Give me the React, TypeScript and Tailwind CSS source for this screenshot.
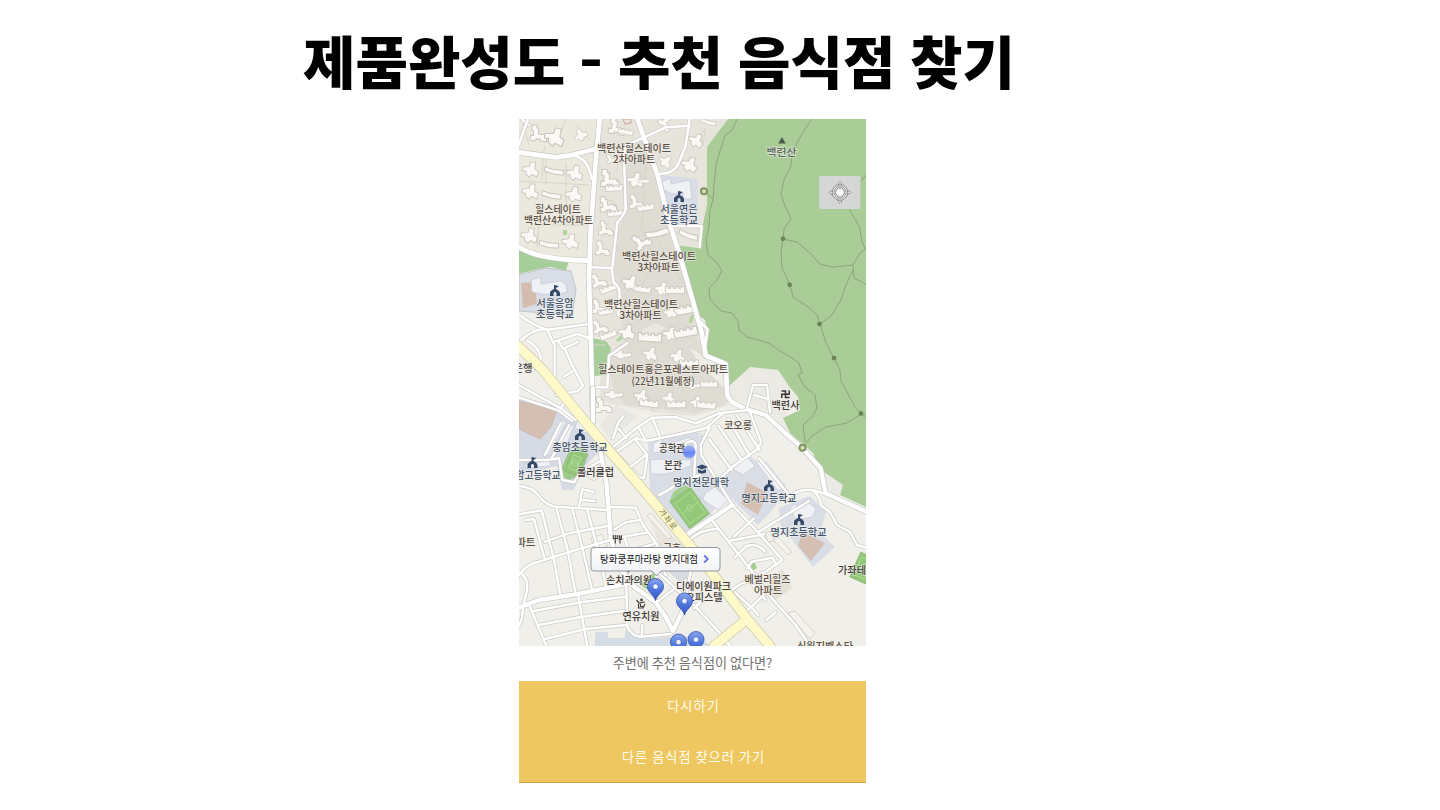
import React from "react";

const font = '"Noto Sans CJK KR", "Noto Sans", sans-serif';

// Road geometry is kept at three units per map pixel, one sheet for the north and one for the south.
const northMain = [
  "M242 0L230 130L215 330L210 480L215 650L222 900",
  "M355 0L375 55L415 165L450 310L480 400L548 640L560 710L620 735L625 830L640 850L690 875",
  "M0 100L110 115L150 110L228 90",
  "M0 385Q60 422 208 425",
];
const northRoads = [
  "M27 0L0 75",
  "M165 110Q210 120 217 180",
  "M512 0L500 80L480 130Q465 168 415 165",
  "M375 55L320 80L315 110L320 270Q315 290 295 310L280 445",
  "M375 55L440 25L512 20",
  "M450 320L548 322L542 384",
  "M215 445L278 447L284 490Q304 505 302 530L298 590",
  "M0 587Q40 618 85 632L210 615",
  "M0 670Q45 625 85 632L107 680V780",
  "M107 668L175 645L210 657M118 665L132 690L178 668M138 690L160 740L192 800L175 817L110 828M25 665Q62 685 66 720L52 750M135 773L160 757",
  "M0 835L120 875L160 905",
  "M217 805H265L270 710L325 673",
  "M530 592L566 632L555 705",
];
const southMain = [
  "M222 -20V80",
  "M245 175L262 260L270 360L275 430Q288 480 310 530L345 575L410 622L440 665L462 708L490 650L500 610",
  "M690 45L740 60L800 115L850 160L905 220L920 295L1045 352",
  "M-5 640L60 615L170 598L330 565",
  "M500 422L640 330",
];
const southRoads = [
  "M0 -30L125 40L170 75M125 40L150 5",
  "M0 273Q40 275 62 305Q80 330 110 335L265 345",
  "M272 335L350 338L372 390L415 450L440 540",
  "M180 335L190 283L224 290M190 315L228 318",
  "M0 358L68 346L105 495L125 605",
  "M112 340L145 460L170 598",
  "M160 342L188 450L220 588",
  "M205 345L230 440L262 575",
  "M20 375L45 372L78 495",
  "M-5 547Q22 505 60 500L170 465L275 435",
  "M78 440L150 415L265 393",
  "M0 530Q30 550 24 585L12 640Q10 680 -5 700",
  "M33 635L83 755M177 598L205 755",
  "M45 648L185 622L318 605M60 690L190 665L315 648M75 733L200 702L322 690",
  "M322 575L325 695Q335 722 365 725L455 717M368 722L370 690",
  "M287 402L320 382L362 375M298 428L388 412M318 430L325 458M330 470L410 445",
  "M390 520L420 535L520 625L590 700L635 755",
  "M415 620L500 555M518 515L502 600M525 640L555 610",
  "M578 375L625 435L700 530L750 600L830 690L875 755",
  "M640 330L720 415L790 495L740 530L660 570L625 595",
  "M510 435Q550 400 600 402M628 438L735 418M648 487L680 455Q710 440 738 470M645 425L705 370",
  "M720 410L870 318M685 520L698 500L760 488L772 510",
  "M648 592L700 640L718 660M668 660L705 628L735 598M695 562L740 615M742 675L770 652",
  "M272 165L355 97L400 68L470 66L530 85L600 55L690 45",
  "M275 182L350 130L385 137L470 120L560 100L612 55",
  "M358 95L380 137M400 68L422 122M348 133L385 180L375 250L335 238M300 185L365 250M335 215L378 182M282 130L298 82L315 62M322 130L300 102",
  "M572 98L545 150L548 182L640 330M570 132L638 225M598 92L668 195M628 72L692 182M655 62L722 165M690 45L727 142L712 165L640 215L610 245",
  "M684 39L702 -30L744 -30L753 51M705 0L745 12",
  "M720 190L810 300M800 315Q835 278 880 285L920 297",
  "M880 285Q905 305 905 330L933 351L954 390L993 411L1014 450L1045 459",
  "M420 300Q455 285 480 260L545 240M525 255L530 150Q525 130 500 145L498 180",
  "M85 195L120 190L130 255L165 262L185 232L240 200M0 195L85 195M78 180L125 85M98 190L150 90",
];

const yellowRoad = "M516 344L542 369L578 413L606 447L640 486L672 524L706 565L747 619L770 646M747 619L714 646";

const trails = [
  "M738 117L732 130L725 136L720 151L716 165L714 185L713 199L710 210L709 226L706 240L708 255L717 263L722 271L716 281L709 288L710 299L721 311L732 313L738 321L739 330L747 337L769 343L780 351L792 358L799 363L802 373",
  "M704 191L713 199",
  "M813 117L803 132L797 143L792 154L791 166L784 180L781 194L785 206L791 219L784 229L783 239L781 250L782 268L790 285L793 297L807 306L817 315L820 324L826 343L834 358L840 370L841 381L847 392L854 405L861 414L869 418",
  "M783 239L797 242L810 253L820 264L832 267L853 265L860 253L868 247",
  "M853 265L854 278L860 281L868 286M853 270L846 285L841 300L831 316L820 324",
  "M866 175L861 181M849 209L855 219L860 228L862 242L866 250",
  "M802 373L798 375L805 387L815 395L817 408L812 417L803 425L805 442",
  "M803 447L812 436L826 427L847 423L861 414",
];

type Label = [string, number, number, number, string?];

const brown = "#5c5044";
const navy = "#41526b";
const dark = "#3e3a36";

const labels: Label[] = [
  ["백련산힐스테이트", 634, 152, 74],
  ["2차아파트", 634, 163.3, 42],
  ["힐스테이트", 558, 213, 46],
  ["백련산4차아파트", 558.5, 224, 69],
  ["서울연은", 679, 212.5, 37, navy],
  ["초등학교", 679, 223.5, 38, navy],
  ["백련산힐스테이트", 659, 260, 74],
  ["3차아파트", 658.5, 271.3, 42],
  ["백련산힐스테이트", 641, 308, 74],
  ["3차아파트", 640.5, 319.3, 42],
  ["서울응암", 555, 307, 37, navy],
  ["초등학교", 555, 318, 38, navy],
  ["은행", 523, 372, 19, dark],
  ["힐스테이트홍은포레스트아파트", 663, 373.3, 130],
  ["(22년11월예정)", 663, 385.3, 63],
  ["백련산", 781.5, 156, 30, "#59645a"],
  ["백련사", 785.5, 409, 28, dark],
  ["코오롱", 738, 429.3, 28],
  ["충암초등학교", 580, 450.5, 55, navy],
  ["암고등학교", 538, 479, 45, navy],
  ["롤러클럽", 595.5, 476, 37, dark],
  ["공학관", 672, 451.5, 26, dark],
  ["본관", 673, 468.5, 18, dark],
  ["명지전문대학", 701, 485.5, 56, navy],
  ["명지고등학교", 769, 501.5, 55, navy],
  ["명지초등학교", 798.5, 536, 56, navy],
  ["아파트", 521, 545.5, 29],
  ["금호", 672, 552, 18],
  ["손치과의원", 629, 584, 46, dark],
  ["연유치원", 641, 620.3, 37, dark],
  ["디에이원파크", 703.5, 590, 55, dark],
  ["오피스텔", 704, 601, 37, dark],
  ["베벌리힐즈", 767.5, 583, 46],
  ["아파트", 768, 594, 28],
  ["가좌테", 852, 574, 28, dark],
  ["신원지벨스타", 825, 649.5, 56],
];

const tower = "M-9 -2L-2 -3L-1 -8L4 -8L4 -1L8 1L7 7L1 5L-1 8L-5 5L-5 2L-9 2Z";
const slab = "M-10 -4L-2 -2L10 -2L10 3L1 3L-10 1Z";
const stairs = "M-6 -9H-1V-6H1V0H8V2H10V7H4V5H-1V7H-7V2H-4V-3H-6Z";
const bars = "M-12 -3L-6 -3L-5 -6L0 -6L1 -2L12 -3L12 2L2 3L0 5L-5 5L-7 2L-12 2Z";
const comb = "M-11 -4H-8V-2H-5V-4H-2V-2H1V-4H4V-2H7V-4H11V4H-11Z";

const buildings: [string, number, number, number, number][] = [
  [stairs, 55, 45, 5, 1], [tower, 108, 55, 10, 1.2], [tower, 185, 48, -40, 0.8], [slab, 15, 5, 40, 0.8],
  [tower, 36, 152, 5, 1], [slab, 105, 157, 6, 1], [tower, 168, 162, 5, 1],
  [tower, 35, 218, 5, 1], [slab, 97, 229, 6, 1], [tower, 165, 226, 0, 1],
  [tower, 32, 350, 5, 1], [slab, 90, 377, 4, 1], [tower, 155, 368, 0, 1],
  [stairs, 290, 25, 10, 1], [comb, 320, 38, 10, 0.7], [stairs, 275, 120, -10, 0.6],
  [stairs, 268, 180, 0, 1.1], [comb, 285, 207, -3, 0.8], [stairs, 263, 258, -5, 1], [comb, 288, 283, -5, 0.7],
  [stairs, 258, 330, 5, 0.9], [stairs, 248, 390, 5, 0.9],
  [tower, 350, 184, 5, 1], [comb, 374, 186, 0, 0.5], [stairs, 350, 250, 0, 0.9], [comb, 380, 265, -8, 0.8],
  [tower, 440, 128, 30, 0.8], [tower, 512, 137, 15, 1], [tower, 532, 65, 20, 0.9], [slab, 568, 10, 10, 0.8],
  [stairs, 440, 10, 50, 0.9], [stairs, 365, 370, -30, 1], [slab, 415, 343, -18, 1.2], [slab, 508, 349, 15, 1],
  [tower, 335, 492, 15, 1], [comb, 370, 510, 8, 0.8], [tower, 430, 510, 5, 0.9], [comb, 468, 513, 0, 0.9],
  [stairs, 237, 487, -10, 0.9], [comb, 268, 509, -20, 0.8], [stairs, 238, 565, 0, 0.9], [comb, 260, 578, -10, 0.7],
  [stairs, 240, 625, -10, 0.9], [comb, 268, 648, -20, 0.8],
  [tower, 325, 640, 5, 1], [comb, 393, 655, 4, 1.1], [tower, 455, 645, 5, 0.9], [comb, 500, 640, -10, 1.1],
  [comb, 500, 572, -10, 1.1], [tower, 455, 580, 0, 0.8],
  [bars, 310, 708, 0, 0.8], [tower, 395, 705, 10, 0.9], [tower, 477, 712, 5, 0.9], [comb, 510, 733, 0, 0.9],
  [bars, 285, 828, 0, 0.8], [stairs, 250, 860, 0, 1],
  [tower, 368, 832, 10, 0.9], [comb, 390, 853, 8, 0.9], [tower, 450, 838, 0, 0.8], [comb, 472, 856, 0, 0.9],
  [tower, 534, 850, 0, 0.8], [comb, 562, 858, 5, 0.9], [bars, 525, 800, 0, 0.7], [comb, 570, 795, 0, 0.8],
];

function School({ x, y }: { x: number; y: number }) {
  return (
    <path
      transform={`translate(${x} ${y})`}
      d="M-5 5V1L-3 -1L-1 -2V-6L4 -5L1 -3V-2L4 0L5 2V5H1.5V2Q0 0 -1.5 2V5Z"
      fill="#354a68"
    />
  );
}

function Pin({ x, y }: { x: number; y: number }) {
  return (
    <g transform={`translate(${x} ${y})`}>
      <path d="M0 14C-1.5 8 -8 6 -8 0A8 8 0 0 1 8 0C8 6 1.5 8 0 14Z" fill="url(#pin)" stroke="#3150a5" strokeWidth="0.8" />
      <circle r="2.6" fill="#f3f6ff" stroke="#3e5fb9" strokeWidth="0.5" />
    </g>
  );
}

function Field({ x, y, w, h, r }: { x: number; y: number; w: number; h: number; r: number }) {
  return (
    <g transform={`translate(${x} ${y}) rotate(${r})`} fill="none" stroke="#b9dfa4" strokeWidth="0.7">
      <rect x={-w / 2} y={-h / 2} width={w} height={h} fill="#93c878" stroke="#8bb57b" />
      <path d={`M${-w / 2 + 3} ${-h / 2 + 4}H${w / 2 - 3}V${h / 2 - 4}H${-w / 2 + 3}ZM${-w / 2 + 3} 0H${w / 2 - 3}`} />
      <circle r="3" />
    </g>
  );
}

function Roads({ paths, color, width }: { paths: string[]; color: string; width: number }) {
  return (
    <g stroke={color} strokeWidth={width}>
      {paths.map((d) => (
        <path key={d} d={d} />
      ))}
    </g>
  );
}

const north = "translate(519 119) scale(0.33333)";
const south = "translate(519 395) scale(0.33333)";

function CityMap() {
  return (
    <svg className="block h-[527px] w-[347px] shrink-0" viewBox="519 119 347 527" style={{ fontFamily: font }}>
      <defs>
        <linearGradient id="pin" x1="0" y1="0" x2="0" y2="1">
          <stop offset="0" stopColor="#8aa6f2" />
          <stop offset="0.5" stopColor="#4f76df" />
          <stop offset="1" stopColor="#3158c4" />
        </linearGradient>
        <linearGradient id="bubble" x1="0" y1="0" x2="0" y2="1">
          <stop offset="0" stopColor="#ffffff" />
          <stop offset="1" stopColor="#edf0f4" />
        </linearGradient>
        <linearGradient id="here" x1="0" y1="0" x2="0" y2="1">
          <stop offset="0" stopColor="#a3b6f8" />
          <stop offset="0.45" stopColor="#7993f4" />
          <stop offset="0.55" stopColor="#6283f4" />
          <stop offset="1" stopColor="#86a2fa" />
        </linearGradient>
      </defs>
      <rect x="519" y="119" width="347" height="527" fill="#f1efe9" />
      <path d="M519 119H599L590 260L519 248Z" fill="#ebe8de" />
      <path d="M600 119H728L707 150V205L700 248L678 246L697 310L703 355L727 367L728 405L695 416L660 413L600 402V378L610 355L606 339L593 336L590 262Z" fill="#e7e4dc" />
      <path d="M626 147L645 140L668 230L690 300L698 340L725 365V405L695 413L625 405L612 385L608 355L625 340L618 300L610 268L617 230L626 212Z" fill="#dfdcd4" />
      <path d="M690 348L703 356L725 365L727 390L700 365Z" fill="#f0ede8" />
      <path d="M600 425L616 405L638 416L610 440Z" fill="#e9e7e2" />
      <path d="M738 378L750 367L778 370L788 384L801 400L783 418L790 435L820 462L843 485L838 497L825 492L817 463L770 412L745 402L728 400L730 388Z" fill="#ebeae4" />
      <path d="M728 119H866V507L840 495L843 485L818 468L813 453L790 433L783 418L800 410L798 397L788 385L785 380L778 370L750 367L738 378L728 387V370L705 357L708 333L705 320L695 313L675 245L698 248L707 205V147Z" fill="#aacd98" />
      <path d="M519 247L545 256L569 260L566 271L551 267L538 269L519 274Z" fill="#a6ce98" />
      <path d="M593 338L606 341L611 348L606 375L594 376Z" fill="#a6ce98" />
      <path d="M640 585L654 572L656 582L648 590ZM749 567L754 561L757 568L752 571Z" fill="#9fce8d" />

      <path d="M519 275L545 268L571 271L576 290L572 315L519 311Z" fill="#d8dde6" stroke="#bfc4ca" />
      <path d="M521 283L535 282L537 304L523 308Z" fill="#d6bcae" />
      <path d="M661 175L698 179L697 224L674 225L665 193Z" fill="#d8dde8" />
      <path d="M519 396L551 405L590 425L604 447L583 468L574 490L562 490L557 466L519 475Z" fill="#d5dae5" />
      <path d="M519 401L557 410L551 427L540 439L519 429Z" fill="#d5bfb3" stroke="#c8b2a9" strokeWidth="0.7" />
      <path d="M648 441L695 432L706 436L700 456L729 497L719 506L685 533L661 505L650 495Z" fill="#d8dde6" />
      <path d="M724 476L748 453L786 493L768 515L758 525L721 488Z" fill="#d8dde6" />
      <path d="M747 482L767 493L758 515L741 504Z" fill="#d5bfb3" />
      <path d="M779 508L810 496L826 512L820 533L835 547L813 567L780 524Z" fill="#d8dde6" />
      <path d="M802 532L825 543L811 561L798 546Z" fill="#d5bfb3" />
      <path d="M595 646V632H608V638H625V630L650 638L690 636L715 646Z" fill="#d5dce3" />
      <path d="M668 571L690 570L686 588Z" fill="#d7dce3" />
      <path d="M775 576L782 569L792 588L773 602L763 591Z" fill="#e4e0d4" />
      <path d="M648 514L665 530L684 547H660Z" fill="#e9e5de" />

      <g fill="#eff1f5" stroke="#c6ccd8" strokeWidth="0.8">
        <path d="M662 182L670 178L671 184L690 180L692 199H683V193L672 194L664 190Z" />
        <path d="M531 280L541 277V284L560 281L566 284L567 292L556 295L542 294L532 292ZM552 300L565 299L567 306L560 308Z" />
        <path d="M577 421L592 426L588 434L575 428ZM561 420L566 422L548 456L543 453ZM570 424L574 426L565 448L560 446ZM525 464L550 461L551 466L525 468Z" />
        <path d="M653 444L662 438V446L690 437L691 443L664 451L653 453ZM650 460L662 459L691 460V466L667 474H651ZM697 434L700 433L702 436L699 437Z" />
        <path d="M731 468L746 456L755 466L743 475ZM756 462L760 460L783 488L778 491ZM766 462L785 486L782 489L763 465ZM789 509L795 504L800 508L806 501L816 508L813 517L797 520Z" />
        <path d="M705 493L715 487L728 500L718 510L703 500ZM700 497L712 515L702 522Z" />
      </g>
      <g fill="#f4f2ed" stroke="#d2cdc2" strokeWidth="0.8">
        <path d="M651 513L672 537L668 539L647 516ZM591 538L602 534L607 546L596 552ZM590 467L601 464L602 474L594 481L586 476ZM773 540L778 537L792 552L788 555ZM765 533L770 531L774 541L768 542ZM775 577L781 574L783 583L776 586ZM788 613L795 611L815 633L810 639Z" />
      </g>
      <path d="M569 452L581 447L588 454L581 474L568 480L560 473Z" fill="#9bcc86" stroke="#8bb57b" strokeWidth="0.7" />
      <Field x={575} y={463} w={14} h={22} r={20} />
      <path d="M669 502L674 491L685 485L692 489L683 497Z" fill="#a5cf91" />
      <Field x={690} y={508} w={25} h={33} r={-36} />
      <Field x={863} y={568} w={17} h={27} r={24} />
      <path d="M616 340L622 334L624 338L618 342ZM689 320L691 315H694L692 323H689ZM563 230H567V235H563Z" fill="#b2d69b" />
      <path d="M623 119H631V123L625 124Z" fill="none" stroke="#d8a096" />

      <g fill="none" stroke="#d7d4cb" strokeWidth="1">
        <path d="M522 119L529 145M519 132L530 126M545 145L543 158L542 180M519 181L588 185M546 155V185M566 162V225M566 119L558 140M575 124L590 140M608 143L618 148L617 173M640 140L646 157L642 225M604 202Q614 196 618 210Q611 219 604 210ZM700 135L705 129L703 145ZM590 225H539L537 247M640 225L655 262L642 285M652 230L680 280M590 345H606M647 393L653 412M639 310L665 290M640 339V350M665 326H690" />
      </g>
      <path d="M641 331L655 323L666 328L652 337Z" fill="#eae7e1" />
      <g transform={north} fill="#faf9f6" stroke="#c9c6be" strokeLinejoin="round">
        {buildings.map(([d, x, y, r, s], i) => (
          <path key={i} d={d} transform={`translate(${x} ${y}) rotate(${r}) scale(${s * 2.9})`} strokeWidth="1" />
        ))}
      </g>

      <g fill="none" strokeLinejoin="round" strokeLinecap="round">
        <g transform={north}>
          <Roads paths={northRoads} color="#cfcdca" width={11.5} />
          <Roads paths={northMain} color="#c8c6c5" width={18} />
          <Roads paths={northRoads} color="#ffffff" width={7.5} />
          <Roads paths={northMain} color="#ffffff" width={14} />
        </g>
        <g transform={south}>
          <Roads paths={southRoads} color="#cbc9c6" width={11.5} />
          <Roads paths={southMain} color="#c8c6c5" width={17} />
          <Roads paths={southRoads} color="#ffffff" width={7.5} />
          <Roads paths={southMain} color="#ffffff" width={13} />
        </g>
        <path d={yellowRoad} stroke="#c9c6ad" strokeWidth="10.6" />
        <path d={yellowRoad} stroke="#fdf9c9" strokeWidth="9.2" />
      </g>

      <g fill="none" stroke="#8aa776" strokeWidth="1" strokeLinejoin="round">
        {trails.map((d) => <path key={d} d={d} />)}
      </g>
      <g fill="#6f8458" stroke="#5d7347" strokeWidth="0.6">
        <circle cx="783" cy="238.7" r="2" />
        <circle cx="789.7" cy="284.8" r="2" />
        <circle cx="819.5" cy="324" r="2" />
        <circle cx="834" cy="358" r="2" />
        <circle cx="861" cy="413.5" r="2" />
      </g>
      <g fill="#d9e1bb" stroke="#7f9460" strokeWidth="2">
        <circle cx="704" cy="191.3" r="3" />
        <circle cx="802.5" cy="447.8" r="3" />
      </g>
      <path d="M778.2 143.5L782 137L785.8 143.5Z" fill="#4d5e4f" />

      <School x={679} y={197} />
      <School x={555} y={291} />
      <School x={580} y={435} />
      <School x={532.5} y={463} />
      <School x={769} y={486} />
      <School x={799} y={520} />
      <path d="M696 467L702 464.5L708 467L702 469.5ZM698 469V472.5Q702 474.5 706 472.5V469L702 471Z" fill="#354a68" />
      <path d="M781.6 391H785.5V397.4H789.6M781.8 398V394.3H789.2V390.4" fill="none" stroke="#393632" strokeWidth="1.5" />
      <path d="M613.3 535V538.5H617.3V535M615.3 535V543.5M620 543.5V535.5M619.2 535.5V539.5H621.5V535.5" fill="none" stroke="#45413c" strokeWidth="1.1" />
      <g fill="none" stroke="#45413c" strokeWidth="1.2">
        <circle cx="641.5" cy="600" r="0.8" />
        <path d="M636.5 600L639 603L645 602M640.5 603V606.5H644M638.5 604V608H643L645 604" />
      </g>
      <circle cx="628.5" cy="571.5" r="1" fill="#35445a" />

      <g fontSize="10.6" fontWeight="500" textAnchor="middle" stroke="#f4f2ed" strokeOpacity="0.7" strokeWidth="1.5" strokeLinejoin="round" paintOrder="stroke">
        {labels.map(([text, x, y, width, color = brown], i) => (
          <text key={i} x={x} y={y} fill={color} textLength={width} lengthAdjust="spacingAndGlyphs">
            {text}
          </text>
        ))}
        <text transform="translate(668 519) rotate(52)" x="0" y="3" fontSize="8" fontWeight="400" fill="#7c7651" stroke="#fbf7c8" textLength="24">
          가좌로
        </text>
      </g>

      <circle cx="689.2" cy="452" r="6" fill="url(#here)" stroke="#738df0" strokeWidth="0.6" />

      <Pin x={655.5} y={586.5} />
      <Pin x={684.5} y={601} />
      <Pin x={678.5} y={642} />
      <Pin x={696} y={639.5} />

      <path d="M594 547.5H717Q720 547.5 720 550.5V568Q720 571 717 571H661L656.5 576L652 571H594Q591 571 591 568V550.5Q591 547.5 594 547.5Z" fill="url(#bubble)" stroke="#9296a0" strokeWidth="1" />
      <text x="600" y="562.7" fontSize="10" fontWeight="400" fill="#111111" textLength="98" lengthAdjust="spacingAndGlyphs">탕화쿵푸마라탕 명지대점</text>
      <path d="M704.2 555.5L707.8 559L704.2 562.5" fill="none" stroke="#6578dc" strokeWidth="1.8" />

      <rect x="819.3" y="176" width="41" height="33" rx="1" fill="#d5d7d7" />
      <g fill="#eeeeee" stroke="#777777" strokeWidth="0.8">
        <path d="M838.6 185.5V183L840 181.6L841.4 183V185.5ZM838.6 199.5V202L840 203.4L841.4 202V199.5ZM833 191.1H830.5L829.1 192.5L830.5 193.9H833ZM847 191.1H849.5L850.9 192.5L849.5 193.9H847Z" />
        <circle cx="840" cy="192.5" r="7.8" />
        <circle cx="840" cy="192.5" r="6" />
        <circle cx="840" cy="192.5" r="4.4" fill="#f8f8f8" />
      </g>
    </svg>
  );
}

export default function App() {
  return (
    <div className="h-[810px] w-[1440px] overflow-hidden bg-white" style={{ fontFamily: font }}>
      <header className="flex h-[119px] pl-[303px] pt-[18px]">
        <h1 className="flex whitespace-nowrap text-[57px] font-black leading-[82px] text-black">
          <span className="w-[276px]">제품완성도</span>
          <span className="w-[39px] origin-left -translate-y-[5px] scale-x-[1.1] scale-y-[0.92]">-</span>
          <span className="w-[120px]">추천</span>
          <span className="w-[172px]">음식점</span>
          <span>찾기</span>
        </h1>
      </header>
      <main className="ml-[519px] flex w-[347px] flex-col">
        <CityMap />
        <p className="flex h-[35px] items-center justify-center pb-[1px] text-[13.1px] leading-none text-[#707070]">
          주변에 추천 음식점이 없다면?
        </p>
        <div className="flex h-[102px] flex-col border-b border-[#c9a43e] bg-[#eec760] text-[13.2px] tracking-[1px] text-[#fffdf0]">
          <button className="h-[51px] pb-[1px] pl-[2px]">다시하기</button>
          <button className="h-[50px] pl-[2px]">다른 음식점 찾으러 가기</button>
        </div>
      </main>
    </div>
  );
}
